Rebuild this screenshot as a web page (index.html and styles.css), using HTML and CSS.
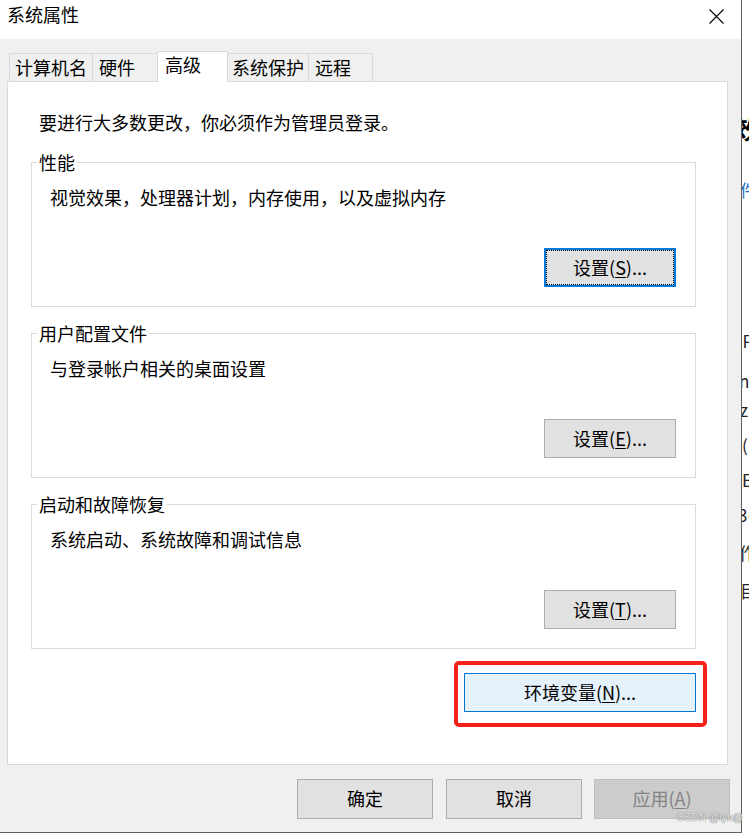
FILE: index.html
```html
<!DOCTYPE html>
<html lang="zh-CN">
<head>
<meta charset="utf-8">
<title>系统属性</title>
<link rel="stylesheet" href="styles.css">
</head>
<body>
<div class="screen">
  <div class="dialog">
    <div class="titlebar">
      <span class="title">系统属性</span>
      <svg class="close" width="15" height="15" viewBox="0 0 15 15" aria-hidden="true">
        <path d="M0.5 0.5 L14.5 14.5 M14.5 0.5 L0.5 14.5" stroke="#000" stroke-width="1.1" fill="none"/>
      </svg>
    </div>
    <div class="content">
      <div class="tabs">
        <div class="tab t1">计算机名</div>
        <div class="tab t2">硬件</div>
        <div class="tab active">高级</div>
        <div class="tab t4">系统保护</div>
        <div class="tab t5">远程</div>
      </div>
      <div class="panel">
        <p class="intro">要进行大多数更改，你必须作为管理员登录。</p>
        <div class="group">
          <div class="legend">性能</div>
          <p class="desc">视觉效果，处理器计划，内存使用，以及虚拟内存</p>
          <button class="btn set focused">设置(<u>S</u>)...</button>
        </div>
        <div class="group">
          <div class="legend">用户配置文件</div>
          <p class="desc">与登录帐户相关的桌面设置</p>
          <button class="btn set">设置(<u>E</u>)...</button>
        </div>
        <div class="group">
          <div class="legend">启动和故障恢复</div>
          <p class="desc">系统启动、系统故障和调试信息</p>
          <button class="btn set">设置(<u>T</u>)...</button>
        </div>
        <div class="env-wrap">
          <button class="btn env">环境变量(<u>N</u>)...</button>
          <span class="annot"></span>
        </div>
      </div>
      <div class="footer">
        <button class="btn foot">确定</button>
        <button class="btn foot cancel">取消</button>
        <button class="btn foot apply" disabled>应用(<u>A</u>)</button>
      </div>
    </div>
  </div>
  <div class="behind">
    <div class="bl b1">效</div>
    <div class="bl b2">件</div>
    <div class="bl b3">OP</div>
    <div class="bl b4">n</div>
    <div class="bl b5">z</div>
    <div class="bl b6">(</div>
    <div class="bl b7">E</div>
    <div class="bl b8">3(</div>
    <div class="bl b9">作</div>
    <div class="bl b10">目</div>
  </div>
</div>
<div class="watermark">CSDN @lyn@</div>
</body>
</html>
```
FILE: styles.css
```css
* { box-sizing: border-box; }
html, body { margin: 0; padding: 0; }
body {
  width: 749px;
  height: 834px;
  overflow: hidden;
  background: #fff;
  font-family: "Noto Sans CJK SC", "Microsoft YaHei", sans-serif;
  font-size: 18px;
  color: #000;
  position: relative;
}
p { margin: 0; }

.screen { display: flex; height: 834px; }

.dialog {
  flex: none;
  width: 742px;
  height: 833px;
  border-right: 1px solid #5f5f5f;
  border-bottom: 1px solid #5f5f5f;
  background: #f0f0f0;
  display: flex;
  flex-direction: column;
}

.titlebar {
  flex: none;
  height: 39px;
  background: #fff;
  display: flex;
  align-items: flex-start;
  justify-content: space-between;
  padding: 0 17px 0 7px;
}
.title { line-height: 22px; margin-top: 3px; }
.close { margin-top: 9px; display: block; }

.content { flex: 1; padding-top: 12px; display: flex; flex-direction: column; }

.tabs {
  display: flex;
  align-items: flex-end;
  height: 30px;
  padding-left: 9px;
}
.tab {
  height: 28px;
  border: 1px solid #d9d9d9;
  border-bottom: none;
  margin-left: -1px;
  padding-top: 1px;
  line-height: 25px;
  white-space: nowrap;
  background: #f0f0f0;
}
.t1 { width: 84px; margin-left: 0; padding-left: 5px; }
.t2 { width: 66px; padding-left: 6px; }
.t4 { width: 82px; padding-left: 4px; }
.t5 { width: 65px; padding-left: 6px; }
.tab.active {
  width: 71px;
  height: 31px;
  padding-top: 0;
  padding-left: 7px;
  background: #fff;
  position: relative;
  z-index: 1;
  margin-bottom: -1px;
}

.panel {
  margin-left: 7px;
  width: 721px;
  height: 684px;
  border: 1px solid #d9d9d9;
  background: #fff;
  padding: 28px 31px 0 23px;
  display: flex;
  flex-direction: column;
}
.intro { margin: 0 0 28px 8px; line-height: 24px; }

.group {
  height: 145px;
  border: 1px solid #dcdcdc;
  padding: 0 19px 19px;
  display: flex;
  flex-direction: column;
}
.group + .group { margin-top: 26px; }
.legend {
  align-self: flex-start;
  margin: -12px 0 0 -14px;
  padding: 0 2px;
  background: #fff;
  line-height: 22px;
}
.desc { margin-top: 12px; margin-left: -1px; line-height: 24px; }

.btn {
  font-family: inherit;
  font-size: 18px;
  color: #000;
  background: #e1e1e1;
  border: 1px solid #adadad;
  padding: 0 0 2px;
  line-height: 24px;
  text-align: center;
  cursor: default;
}
.btn u { text-underline-offset: 2px; text-decoration-thickness: 1px; }
.set {
  margin-top: auto;
  align-self: flex-end;
  width: 132px;
  height: 39px;
}
.focused {
  border: 2px solid #0078d7;
  outline: 1px dotted #000;
  outline-offset: -3px;
}

.env-wrap {
  align-self: flex-end;
  margin-top: 24px;
  position: relative;
}
.env {
  display: block;
  width: 232px;
  height: 39px;
  background: #e5f1fb;
  border: 1px solid #0078d7;
}
.annot {
  position: absolute;
  left: -10px;
  top: -12px;
  right: -11px;
  bottom: -15px;
  border: 4px solid #f4211a;
  border-radius: 5px;
  pointer-events: none;
}

.footer {
  margin-top: 14px;
  display: flex;
  justify-content: flex-end;
  padding-right: 11px;
}
.foot { width: 136px; height: 40px; }
.cancel { margin-left: 13px; }
.apply {
  margin-left: 12px;
  background: #cccccc;
  border-color: #bfbfbf;
  color: #838383;
}

.behind {
  flex: none;
  width: 7px;
  height: 834px;
  overflow: hidden;
  background: #fff;
  display: flex;
  flex-direction: column;
}
.bl {
  white-space: nowrap;
  height: 20px;
  line-height: 20px;
  font-size: 17px;
  margin-left: -4px;
  color: #222;
}
.b1 { margin-top: 113px; height: 30px; line-height: 30px; font-size: 26px; font-weight: 700; color: #000; margin-left: -9px; }
.b2 { margin-top: 37px; color: #1a6fc4; margin-left: -2px; }
.b3 { margin-top: 131px; margin-left: -12px; }
.b4 { margin-top: 20px; margin-left: -3px; }
.b5 { margin-top: 9px; margin-left: -2px; }
.b6 { margin-top: 15px; margin-left: 0; }
.b7 { margin-top: 15px; margin-left: 0; }
.b8 { margin-top: 15px; margin-left: -4px; }
.b9 { margin-top: 18px; margin-left: -3px; }
.b10 { margin-top: 18px; margin-left: -2px; }

.watermark {
  position: absolute;
  left: 677px;
  top: 812px;
  font-family: "Liberation Sans", Arial, sans-serif;
  font-size: 10px;
  line-height: 12px;
  color: #f2f2f2;
  text-shadow: 0 0 1px #6f6f6f, 0 0 1px #6f6f6f;
  letter-spacing: 0.2px;
}
```
